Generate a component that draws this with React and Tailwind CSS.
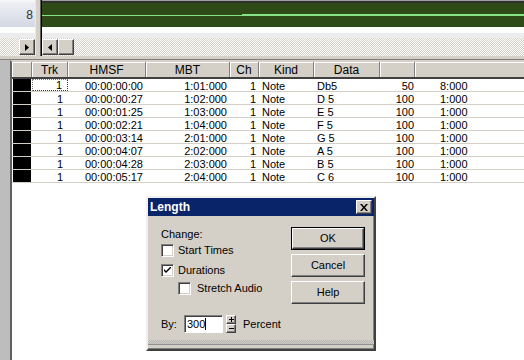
import React from "react";

const rows = [
  ["00:00:00:00", "1:01:000", "Db5", "50", "8:000"],
  ["00:00:00:27", "1:02:000", "D 5", "100", "1:000"],
  ["00:00:01:25", "1:03:000", "E 5", "100", "1:000"],
  ["00:00:02:21", "1:04:000", "F 5", "100", "1:000"],
  ["00:00:03:14", "2:01:000", "G 5", "100", "1:000"],
  ["00:00:04:07", "2:02:000", "A 5", "100", "1:000"],
  ["00:00:04:28", "2:03:000", "B 5", "100", "1:000"],
  ["00:00:05:17", "2:04:000", "C 6", "100", "1:000"],
];

const btn =
  "bg-[#d4d0c8] border border-t-white border-l-white border-r-[#404040] border-b-[#404040] shadow-[inset_-1px_-1px_#808080]";

function ScrollBtn({ dir }) {
  return (
    <div className={`w-[16px] h-[16px] flex items-center justify-center ${btn}`}>
      {dir === "right" && (
        <svg width="4" height="7" viewBox="0 0 4 7">
          <path d="M0 0 L4 3.5 L0 7 Z" fill="#000" />
        </svg>
      )}
      {dir === "left" && (
        <svg width="4" height="7" viewBox="0 0 4 7">
          <path d="M4 0 L0 3.5 L4 7 Z" fill="#000" />
        </svg>
      )}
    </div>
  );
}

function Checkbox({ checked }) {
  return (
    <div className="w-[13px] h-[13px] bg-white border border-t-[#808080] border-l-[#808080] border-r-white border-b-white shadow-[inset_1px_1px_#404040,inset_-1px_-1px_#d4d0c8] flex items-center justify-center">
      {checked && (
        <svg width="7" height="7" viewBox="0 0 7 7">
          <path d="M0 2 L0 4 L2 6 L7 1 L7 -1 L2 4 Z" fill="#000" />
        </svg>
      )}
    </div>
  );
}

function Header({ w, label }) {
  return (
    <div
      className={`h-full flex items-center justify-center pt-[1px] border-r border-r-[#808080] shadow-[inset_1px_1px_#ffffff] ${w}`}
    >
      {label}
    </div>
  );
}

export default function App() {
  const checker =
    "bg-[repeating-conic-gradient(#d4d0c8_0%_25%,#ffffff_0%_50%)] bg-[length:2px_2px]";
  return (
    <div className="w-[524px] h-[360px] relative overflow-hidden bg-[#d4d0c8] flex flex-col font-['Liberation_Sans',Arial,sans-serif] text-[11px] text-black">
      {/* Top area */}
      <div className="h-[56px] flex">
        <div className="w-[36px] flex flex-col border-r border-r-[#e8e8e8]">
          <div className="h-[2px] bg-[#f4f6f8]" />
          <div className="h-[25px] bg-gradient-to-b from-[#eef0f4] to-[#d4d8e4] flex items-center justify-end pr-[2px] text-[12px] text-[#303030]">
            8
          </div>
          <div className="h-[6px] bg-[#fcfefc]" />
          <div className="h-[5px] bg-[#ececec]" />
          <div className={`flex-1 flex justify-end pt-[1px] ${checker}`}>
            <ScrollBtn dir="right" />
          </div>
        </div>
        <div className="w-[5px] bg-[#d4d0c8] border-r border-r-[#606060]" />
        <div className="flex-1 flex flex-col border-l border-l-black">
          <div className="h-[1px] bg-[#a0a0a0]" />
          <div className="h-[2px] bg-[#303030]" />
          <div className="h-[24px] bg-[#2d4a17] flex flex-col pt-[11px]">
            <div className="flex">
              <div className="w-[200px] h-[1px] mt-[1px] bg-[#86e286]" />
              <div className="flex-1 h-[2px] bg-[#86e286]" />
            </div>
          </div>
          <div className="h-[6px] bg-[#fcfefc]" />
          <div className="h-[5px] bg-[#ececec]" />
          <div className={`flex-1 flex pt-[1px] ${checker}`}>
            <ScrollBtn dir="left" />
            <div className={`w-[16px] h-[16px] ${btn}`} />
          </div>
        </div>
      </div>
      <div className="h-[4px] bg-[#d4d0c8] border-b border-b-[#808080]" />

      {/* List area */}
      <div className="flex-1 flex">
        <div className="w-[10px] bg-[#bdbdbd]" />
        <div className="flex-1 flex flex-col bg-white border-l-2 border-t-2 border-l-[#606060] border-t-[#d4d0c8]">
          <div className="h-[17px] flex bg-[#d4d0c8] border-b-2 border-b-[#404040] text-[12px]">
            <Header w="w-[20px]" label="" />
            <Header w="w-[36px]" label="Trk" />
            <Header w="w-[78px]" label="HMSF" />
            <Header w="w-[84px]" label="MBT" />
            <Header w="w-[29px]" label="Ch" />
            <Header w="w-[55px]" label="Kind" />
            <Header w="w-[66px]" label="Data" />
            <Header w="w-[35px]" label="" />
            <div className="flex-1 h-full shadow-[inset_1px_1px_#ffffff]" />
          </div>
          {rows.map((r, i) => (
            <div key={i} className="h-[13px] flex border-b border-b-[#d4d0c8] leading-[14px]">
              <div className="w-[20px] pl-[1px]">
                <div className="w-[18px] h-full bg-black" />
              </div>
              <div
                className={`w-[36px] text-right pr-[5px] ${
                  i === 0
                    ? "border border-dotted border-[#808080] border-r-[#802020] border-b-[#802020] leading-[11px]"
                    : ""
                }`}
              >
                1
              </div>
              <div className="w-[78px] text-right pr-[3px]">{r[0]}</div>
              <div className="w-[84px] text-right pr-[3px]">{r[1]}</div>
              <div className="w-[29px] text-right pr-[3px]">1</div>
              <div className="w-[55px] pl-[3px]">Note</div>
              <div className="w-[66px] pl-[3px]">{r[2]}</div>
              <div className="w-[35px] text-right pr-[1px]">{r[3]}</div>
              <div className="flex-1 pl-[25px]">{r[4]}</div>
            </div>
          ))}
        </div>
      </div>

      {/* Dialog */}
      <div className="absolute left-[146px] top-[196px] w-[230px] h-[155px] bg-[#d4d0c8] border-2 border-t-[#f0f0f0] border-l-[#f0f0f0] border-r-[#404040] border-b-[#404040] shadow-[inset_-1px_-1px_#808080] flex flex-col">
        <div className="h-[18px] bg-[#0a246a] flex items-center justify-between pl-[2px] pr-[2px]">
          <span className="text-white font-bold text-[12px]">Length</span>
          <div className={`w-[16px] h-[14px] flex items-center justify-center ${btn}`}>
            <svg width="8" height="7" viewBox="0 0 8 7">
              <path d="M0 0 L2 0 L4 2.5 L6 0 L8 0 L5 3.5 L8 7 L6 7 L4 4.5 L2 7 L0 7 L3 3.5 Z" fill="#000" />
            </svg>
          </div>
        </div>
        <div className="flex pl-[13px] pr-[9px] pt-[11px]">
          <div className="flex-1 flex flex-col">
            <div className="h-[14px] leading-[14px]">Change:</div>
            <div className="mt-[3px] h-[13px] flex items-center gap-[4px]">
              <Checkbox />
              <span>Start Times</span>
            </div>
            <div className="mt-[7px] h-[13px] flex items-center gap-[4px]">
              <Checkbox checked />
              <span>Durations</span>
            </div>
            <div className="mt-[5px] h-[13px] flex items-center gap-[6px] pl-[17px]">
              <Checkbox />
              <span>Stretch Audio</span>
            </div>
          </div>
          <div className="w-[74px] flex flex-col gap-[4px]">
            <div className="h-[23px] border border-black">
              <div className={`h-full flex items-center justify-center ${btn}`}>OK</div>
            </div>
            <div className={`h-[23px] flex items-center justify-center ${btn}`}>Cancel</div>
            <div className={`h-[23px] flex items-center justify-center ${btn}`}>Help</div>
          </div>
        </div>
        <div className="mt-[11px] pl-[13px] h-[18px] flex items-center">
          <span className="w-[23px] pt-[1px]">By:</span>
          <div className="w-[39px] h-[18px] bg-white border border-t-[#808080] border-l-[#808080] border-r-white border-b-white shadow-[inset_1px_1px_#404040] flex items-center pl-[2px]">
            <span>300</span>
            <span className="w-[1px] h-[12px] bg-black" />
          </div>
          <div className="ml-[3px] w-[10px] h-[18px] flex flex-col">
            <div className={`flex-1 flex items-center justify-center ${btn}`}>
              <svg width="5" height="5" viewBox="0 0 5 5">
                <path d="M2 0 H3 V2 H5 V3 H3 V5 H2 V3 H0 V2 H2 Z" fill="#000" />
              </svg>
            </div>
            <div className={`flex-1 flex items-center justify-center ${btn}`}>
              <svg width="5" height="1" viewBox="0 0 5 1">
                <rect width="5" height="1" fill="#000" />
              </svg>
            </div>
          </div>
          <span className="ml-[7px] pt-[1px]">Percent</span>
        </div>
        <div className="mt-[7px] h-[5px] bg-[repeating-conic-gradient(#b4b4b4_0%_25%,#d4d0c8_0%_50%)] bg-[length:2px_2px] border-b border-b-[#909090]" />
      </div>
    </div>
  );
}
